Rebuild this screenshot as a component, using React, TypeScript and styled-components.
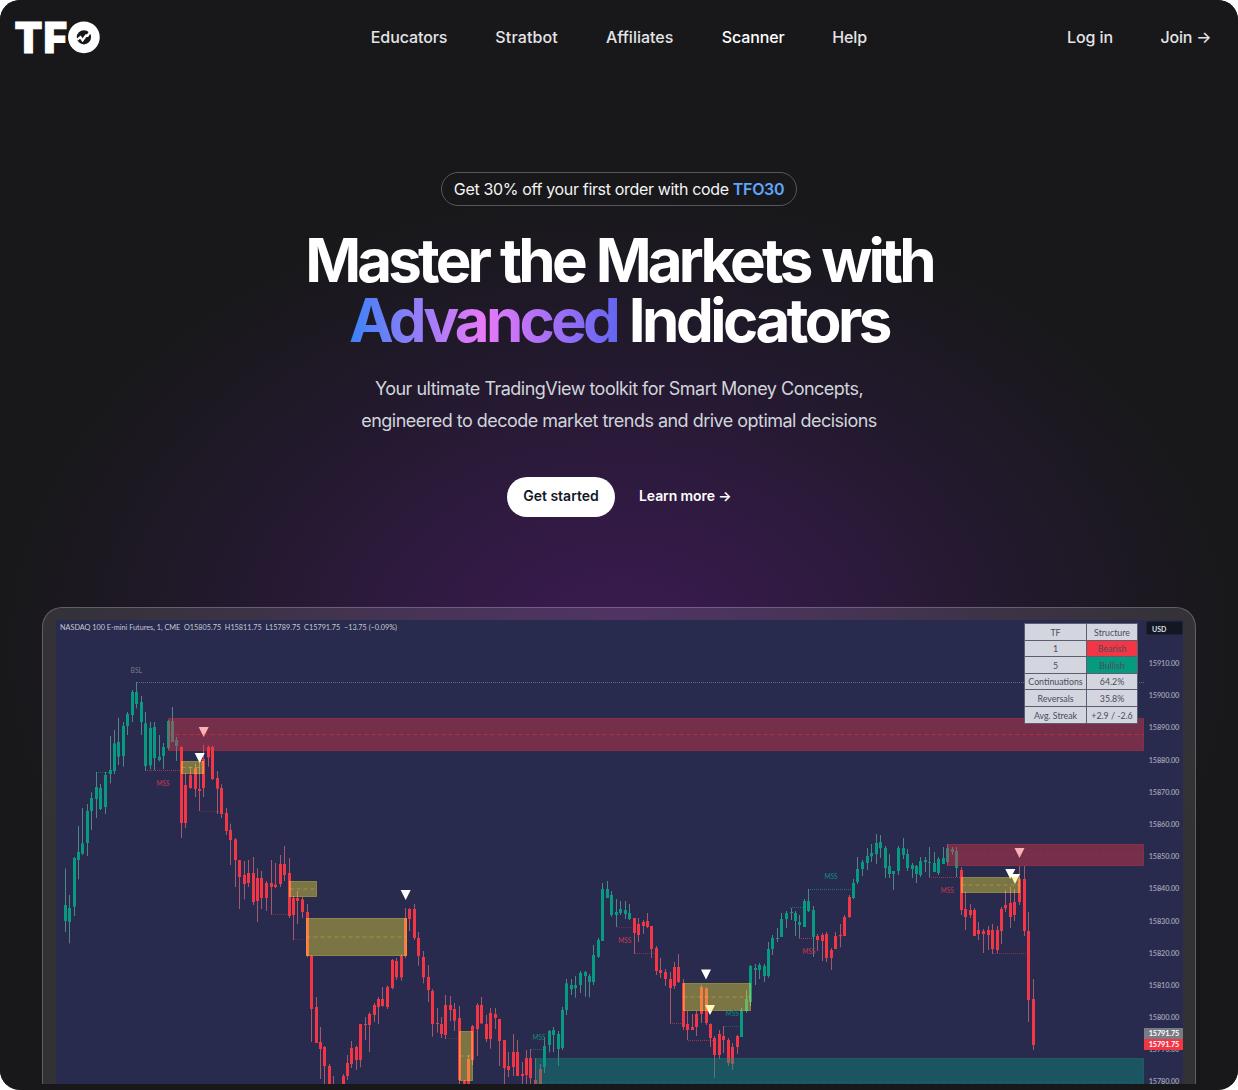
import React from "react";
import styled, { createGlobalStyle } from "styled-components";

const GlobalStyle = createGlobalStyle`
  *, *::before, *::after { box-sizing: border-box; }
  html, body { margin: 0; padding: 0; background: #fff; }
  body { font-family: Inter, "Liberation Sans", sans-serif; }
  a { color: inherit; text-decoration: none; }
`;

const Page = styled.div`
  height: 1090px;
  width: 1238px;
  overflow: hidden;
  border-radius: 20px;
  background: #18181a;
`;

const Hero = styled.div`
  height: 1084px;
  overflow: hidden;
  display: flex;
  flex-direction: column;
  align-items: center;
  background: radial-gradient(ellipse 620px 460px at 619px 650px, #3c1b53 0%, #2f1a40 35%, #21192b 68%, #18181a 100%);

  > * { flex: none; }
`;

const Header = styled.header`
  width: 100%;
  height: 74px;
  padding: 0 12px;
  display: grid;
  grid-template-columns: 1fr auto 1fr;
  align-items: center;
  font-size: 16px;
  font-weight: 500;
  line-height: 24px;
  color: #e4e4e7;
`;

const Nav = styled.nav<{ $end?: boolean }>`
  display: flex;
  gap: 48px;
  padding-right: ${(p) => (p.$end ? 16 : 0)}px;
  justify-content: ${(p) => (p.$end ? "flex-end" : "center")};
`;

const NavLink = styled.a<{ $bright?: boolean; $w: number; $track?: number }>`
  width: ${(p) => p.$w}px;
  white-space: nowrap;
  letter-spacing: ${(p) => p.$track ?? -0.1}px;
  color: ${(p) => (p.$bright ? "#fff" : "#e4e4e7")};
`;

const Promo = styled.div`
  margin-top: 98px;
  height: 34px;
  width: 356px;
  border: 1px solid #57575b;
  border-radius: 17px;
  display: flex;
  align-items: center;
  justify-content: center;
  white-space: pre;
  font-size: 16px;
  letter-spacing: -0.34px;
  color: #f4f4f5;
`;

const Code = styled.span`
  font-weight: 600;
  color: #60a5fa;
`;

const Title = styled.h1`
  margin: 24px 0 0;
  font-size: 60px;
  line-height: 60px;
  font-weight: 650;
  letter-spacing: -3.8px;
  word-spacing: 1.4px;
  text-align: center;
  color: #fff;
  white-space: nowrap;
`;

const Gradient = styled.span`
  color: transparent;
  background: linear-gradient(to right, #3b82f6, #e879f9 50%, #6366f1);
  background-clip: text;
  -webkit-background-clip: text;
`;

const Indicators = styled.span`
  letter-spacing: -3.5px;
`;

const Lead = styled.p`
  margin: 23px 0 0;
  font-size: 18px;
  line-height: 32px;
  text-align: center;
  color: #d1d5db;
  letter-spacing: -0.52px;
`;

const Actions = styled.div`
  margin-top: 40px;
  display: flex;
  align-items: center;
  gap: 24px;
  font-size: 14px;
  line-height: 20px;
  font-weight: 600;
`;

const Primary = styled.a`
  width: 108px;
  height: 40px;
  padding-bottom: 2px;
  border-radius: 20px;
  display: flex;
  align-items: center;
  justify-content: center;
  background: #fff;
  color: #111827;
`;

const Secondary = styled.a`
  width: 92px;
  padding-bottom: 2px;
  color: #fff;
  white-space: nowrap;
  letter-spacing: -0.1px;
`;

const Frame = styled.section`
  margin-top: 90px;
  width: 1154px;
  height: 600px;
  padding: 12px 12px 0 13px;
  border: 1px solid rgba(255, 255, 255, 0.22);
  border-radius: 20px;
  background: rgba(255, 255, 255, 0.115);
`;

const Panel = styled.div`
  position: relative;
  display: flex;
  width: 1127px;
  height: 588px;
  background: #282b4d;
  font-family: Lato, "Open Sans", sans-serif;
`;

const Plot = styled.svg`
  display: block;
  width: 1088px;
  height: 464px;
  font-family: Lato, "Open Sans", sans-serif;
`;

const Axis = styled.div`
  position: relative;
  width: 39px;
  padding-top: 28px;
  height: 464px;
  overflow: hidden;
`;

const Tick = styled.div`
  height: 32.19px;
  line-height: 32.19px;
  font-size: 7.3px;
  font-weight: 600;
  letter-spacing: -0.1px;
  padding-left: 4.7px;
  color: #a3a5b3;
`;

const Currency = styled.div`
  position: absolute;
  top: 1px;
  left: 2px;
  width: 37px;
  height: 14px;
  padding-left: 5px;
  border: 1px solid #1f2338;
  border-radius: 2px;
  background: #131722;
  color: #dcdde2;
  font-size: 7px;
  line-height: 14px;
  font-weight: 700;
`;

const Badge = styled.div<{ $bg: string; $top: number }>`
  position: absolute;
  left: 0;
  top: ${(p) => p.$top}px;
  width: 39px;
  height: 11px;
  padding-left: 4.7px;
  background: ${(p) => p.$bg};
  color: #fff;
  font-size: 7.3px;
  line-height: 11.4px;
  font-weight: 700;
  letter-spacing: -0.1px;
`;

const Stats = styled.div`
  position: absolute;
  left: 968px;
  top: 3px;
  padding: 1px;
  display: grid;
  grid-template-columns: 61px 50px;
  grid-template-rows: 16px 15px 16px 15px 16px 16px;
  gap: 1px;
  background: #5b5e70;
`;

const Stat = styled.div<{ $bg?: string }>`
  display: flex;
  align-items: center;
  justify-content: center;
  white-space: nowrap;
  font-size: 8.8px;
  color: #4a4d5c;
  background: ${(p) => p.$bg ?? "#d3d5df"};
`;

const GREEN = "#089981";
const RED = "#f23645";

// Each run: left and top origin in pixels, then candles as
// [x, high, open/close top, open/close bottom, low, falling?] in thirds of a pixel.
type Candle = [number, number, number, number, number, number];
type Run = { x: number; y: number; candles: Candle[] };

const runs: Run[] = [
  { x: 40, y: 780, candles: [
    [75,265,375,423,456,0],[88,345,384,426,490,0],[103,231,234,380,408,0],[115,138,216,240,298,0],
    [127,84,190,221,225,0],[142,72,93,189,228,0],[154,37,54,93,150,0],
    [571,131,150,180,255,1],[585,174,178,240,321,1],[598,240,240,291,387,1],[613,243,285,312,358,1],
    [625,240,279,309,321,1],[640,231,279,366,375,1],[652,264,294,363,426,1],[664,273,294,354,387,1],
    [679,303,309,354,393,1],[694,240,309,321,403,1],[706,249,314,321,324,1],
  ] },
  { x: 40, y: 600, candles: [
    [169,516,561,597,654,0],[182,552,564,627,630,0],[196,516,525,621,642,0],[211,408,510,522,550,0],
    [223,390,430,513,522,0],[235,353,426,470,495,0],[250,366,378,468,500,0],[262,336,342,378,405,0],
    [277,270,276,345,366,0],[290,246,276,312,325,0],[304,288,306,366,405,0],[316,336,370,498,513,0],
    [331,366,384,496,508,0],[343,366,381,474,510,0],[358,405,470,480,484,0],[370,429,441,468,507,0],
    [385,360,363,444,450,0],[397,321,363,426,426,0],[409,411,420,438,483,0],[424,438,441,669,714,1],
    [437,520,555,669,684,1],[451,500,525,564,566,1],[466,490,505,567,591,1],[478,485,567,573,633,1],
    [490,435,477,564,591,1],[505,437,441,472,500,1],[517,437,441,537,540,1],[532,513,534,566,642,1],
    [545,553,564,642,654,1],[559,624,639,693,705,1],
  ] },
  { x: 240, y: 840, candles: [
    [121,45,72,132,141,1],[133,18,72,105,123,1],[148,54,99,228,234,1],[160,168,174,225,300,1],
    [172,153,174,183,252,1],[187,171,178,216,234,1],[201,192,216,348,352,1],[214,346,348,507,606,1],
    [229,471,501,609,609,1],[241,561,606,627,717,1],[253,618,621,678,732,1],[268,672,678,732,732,1],
    [281,708,732,735,735,1],[309,702,708,732,732,1],[322,645,669,708,720,1],[334,603,624,672,684,1],
    [349,617,621,660,690,1],[361,552,552,660,682,1],[376,531,552,555,600,1],[388,517,522,555,636,1],
    [403,489,495,525,546,1],[416,471,477,501,552,1],[428,441,477,498,500,1],[442,436,441,501,507,1],
    [457,357,360,444,448,1],[469,354,363,412,420,1],[484,342,348,412,422,1],[496,204,234,348,354,1],
    [508,204,207,237,273,1],[523,192,207,294,300,1],[536,276,294,348,377,1],[550,333,351,412,430,1],
    [564,375,411,450,486,1],[577,447,453,552,590,1],[592,504,549,552,578,1],[604,531,552,582,594,1],
    [616,465,495,585,597,1],[631,468,495,510,543,1],[643,489,507,542,573,1],[658,498,534,720,732,1],
    [673,720,723,732,732,1],[686,645,657,732,732,1],[697,555,558,660,675,1],[712,489,495,567,648,1],
  ] },
  { x: 430, y: 860, candles: [
    [154,411,435,490,492,1],[169,465,492,537,546,1],[182,444,459,537,566,1],[196,444,462,474,507,1],
    [208,477,477,543,618,1],[222,540,540,624,672,1],[235,576,618,630,651,1],[250,522,576,621,648,1],
    [262,540,576,648,648,1],[277,606,642,648,672,1],[290,570,594,645,672,1],[301,567,594,654,672,1],
    [316,594,660,672,672,1],[330,612,627,672,672,1],[343,531,558,621,639,0],[358,510,513,555,577,0],
    [370,501,510,525,576,0],[385,513,522,567,618,0],[397,441,450,564,570,0],[409,357,370,450,465,0],
    [424,357,375,388,405,0],[436,348,375,384,413,0],[451,333,339,375,399,0],[465,333,336,348,410,0],
    [477,342,348,366,412,0],[490,255,285,366,375,0],[505,234,240,290,294,0],[517,69,87,243,243,0],
    [532,63,87,114,114,0],[545,93,105,165,170,0],[559,117,156,165,201,0],[571,123,147,159,165,0],
    [585,123,150,162,177,0],[598,132,159,177,180,0],[613,174,174,219,282,1],[625,174,192,225,246,1],
    [640,180,186,198,222,1],[652,159,183,201,204,1],[664,198,198,267,294,1],[679,258,264,333,345,1],
    [692,294,330,339,354,1],[706,327,336,357,378,1],
  ] },
  { x: 640, y: 900, candles: [
    [91,216,237,264,370,1],[103,186,201,258,267,1],[115,162,201,246,249,1],[130,237,249,381,390,1],
    [142,333,372,390,420,1],[157,342,381,390,390,1],[169,333,342,381,408,1],[184,255,261,342,369,1],
    [198,262,265,369,375,1],[211,370,372,414,441,1],[223,408,414,465,534,1],[238,390,402,465,477,1],
    [250,378,408,420,459,1],[265,414,420,489,498,1],[278,429,441,492,510,1],[292,405,408,441,462,1],
    [304,324,333,411,411,0],[318,270,297,333,339,0],[331,195,198,306,318,0],
  ] },
  { x: 740, y: 810, candles: [
    [46,462,474,480,525,0],[58,459,465,480,507,0],[73,462,468,498,516,0],[85,396,417,498,503,0],
    [97,375,384,417,435,0],[112,354,384,387,396,0],[125,309,327,381,381,0],[139,303,309,327,354,0],
    [154,294,306,309,330,0],[166,303,309,333,378,0],[178,315,336,345,384,0],[193,267,273,351,351,0],
    [205,237,273,303,306,0],[220,288,300,381,441,0],[232,372,378,390,423,1],[247,369,375,393,453,1],
    [259,366,372,444,456,1],[274,414,420,444,480,1],[286,366,378,417,417,1],[301,342,375,379,412,1],
    [313,315,321,378,378,1],[328,255,261,321,324,1],[340,207,219,264,267,0],[353,141,177,216,222,0],
    [367,150,156,177,198,0],[381,114,138,159,180,0],[394,102,129,139,156,0],[409,72,99,132,162,0],
    [421,75,96,115,144,0],[436,108,114,174,204,0],[448,132,168,192,204,0],[460,183,183,192,240,0],
    [475,108,114,183,195,0],[489,84,114,135,147,0],[502,117,132,174,183,0],[517,159,165,177,204,0],
    [529,165,168,192,219,0],[541,141,153,195,201,0],[556,141,150,156,186,0],[568,111,156,159,201,0],
    [583,126,159,186,186,0],[596,141,147,189,195,0],[610,111,144,162,162,0],[622,102,114,156,166,0],
    [637,111,117,126,135,0],[649,111,123,174,201,0],[664,171,180,300,315,1],[676,246,297,321,360,1],
    [691,282,300,315,324,1],[704,294,300,378,378,1],
  ] },
  { x: 930, y: 820, candles: [
    [145,306,330,342,360,1],[160,327,333,342,399,1],[175,318,330,345,390,1],[188,312,330,387,402,1],
    [202,318,330,390,399,1],[215,261,267,333,372,1],[227,210,255,265,276,1],[241,201,249,291,324,1],
    [253,207,246,285,303,1],[268,138,177,246,255,1],[282,138,177,333,348,1],[295,276,333,540,606,1],
    [310,477,537,675,690,1],
  ] },
];

const YELLOW = "#ffeb3b";
// [left, top, right, bottom, colour, opacity of the mid line]
const zones: [number, number, number, number, string, number][] = [
  [168.5, 718.5, 1143.5, 750.5, RED, 0.6],
  [947.5, 844.5, 1143.5, 865.5, RED, 0.2],
  [181.5, 761.5, 203.5, 773.5, YELLOW, 0.35],
  [289.5, 881.5, 316.5, 896.5, YELLOW, 0.35],
  [306.5, 918.5, 406.5, 955.5, YELLOW, 0.35],
  [459.5, 1031.5, 472.5, 1080.5, YELLOW, 0.35],
  [683.5, 983.5, 750.5, 1010.5, YELLOW, 0.35],
  [961.5, 877.5, 1019.5, 892.5, YELLOW, 0.35],
  [535.5, 1058.5, 1143.5, 1106.5, GREEN, 0.3],
];

// [x1, x2, y, colour, opacity]
const levels: [number, number, number, string, number][] = [
  [137, 1144, 682.5, "#8c8e9c", 0.6],
  [96, 110, 772.5, GREEN, 0.6],
  [147, 182, 770.5, RED, 0.65],
  [200, 222, 811.5, RED, 0.35],
  [271, 290, 914.5, RED, 0.45],
  [293, 306, 939.5, RED, 0.3],
  [446, 460, 1038.5, RED, 0.3],
  [531, 543, 1049.5, GREEN, 0.6],
  [617, 632, 927.5, RED, 0.3],
  [635, 656, 953.5, RED, 0.5],
  [670, 683, 1023.5, RED, 0.6],
  [688, 714, 1040.5, RED, 0.6],
  [724, 740, 1026.5, GREEN, 0.5],
  [790, 805, 907.5, GREEN, 0.7],
  [808, 853, 889.5, GREEN, 0.7],
  [799, 815, 938.5, RED, 0.7],
  [929, 960, 877.5, RED, 0.6],
  [993, 1027, 953.5, RED, 0.45],
];

const arrows: [number, number][] = [
  [203.7, 727], [199.7, 753], [405.7, 890], [706, 969.5], [710, 1005], [1019.5, 848], [1010.3, 869], [1015, 874],
];

const labels: [number, number, string, string][] = [
  [136.3, 672.7, "BSL", "#777a8c"],
  [163, 786.4, "MSS", "#c93850"],
  [539, 1040, "MSS", "#128a7b"],
  [624.7, 943, "MSS", "#c93850"],
  [732.2, 1016.2, "MSS", "#128a7b"],
  [808.7, 953.7, "MSS", "#c93850"],
  [831, 879, "MSS", "#128a7b"],
  [947.3, 892.7, "MSS", "#c93850"],
];

const stats: [string, string, string?][] = [
  ["TF", "Structure"],
  ["1", "Bearish", RED],
  ["5", "Bullish", GREEN],
  ["Continuations", "64.2%"],
  ["Reversals", "35.8%"],
  ["Avg. Streak", "+2.9 / -2.6"],
];

const prices = Array.from({ length: 14 }, (_, i) => `${15910 - i * 10}.00`);

const LogoMark = styled.svg`
  display: block;
  width: 90px;
  height: 34px;
  overflow: visible;
  font: 900 42px Inter, sans-serif;
`;

const Logo = () => (
  <LogoMark viewBox="12 20 90 34" role="img" aria-label="TFO">
    <g fill="#fff" stroke="#fff" strokeWidth="0.9">
      <text x="14.6" y="52.6" textLength="28" lengthAdjust="spacingAndGlyphs">T</text>
      <text x="43.4" y="52.6" textLength="23.6" lengthAdjust="spacingAndGlyphs">F</text>
    </g>
    <circle cx="83.9" cy="37.3" r="11.5" fill="none" stroke="#fff" strokeWidth="8.7" />
    <path d="M77.2 39.6l3.2-2.4 2.2 3 3.4-4.7 1.6.2 2.3-3.6" fill="none" stroke="#fff" strokeWidth="2.3" />
  </LogoMark>
);

const Candles = () => (
  <>
    {runs.flatMap((run) =>
      run.candles.map(([x, high, top, bottom, low, falling]) => {
        const left = Math.floor(run.x + x / 3);
        const color = falling ? RED : GREEN;
        const y = (v: number) => run.y + v / 3;
        return (
          <g key={`${run.x}-${run.y}-${x}`}>
            <rect x={left} width={1} y={y(high)} height={(low - high) / 3} fill={falling ? "#e8707e" : "#62b5a5"} opacity={0.65} />
            <rect x={left - 1} width={3} y={y(top)} height={(bottom - top) / 3} fill={color} />
          </g>
        );
      })
    )}
  </>
);

const Chart = () => (
  <Plot viewBox="56 620 1088 464">
    {levels.map(([x1, x2, y, color, opacity]) => (
      <line key={`${x1}-${y}`} x1={x1} x2={x2} y1={y} y2={y} stroke={color} opacity={opacity} strokeDasharray="1 1" />
    ))}
    <Candles />
    {arrows.map(([x, y]) => (
      <path key={`${x}-${y}`} d={`M${x - 5} ${y}h10l-5 10z`} fill="#fff" />
    ))}
    {zones.map(([l, t, r, b, color, mid]) => (
      <g key={`${l}-${t}`} stroke={color}>
        <rect x={l} y={t} width={r - l} height={b - t} fill={color} fillOpacity={0.39} strokeOpacity={0.35} />
        <line x1={l} x2={r} y1={(t + b) / 2} y2={(t + b) / 2} strokeDasharray="4 3" strokeOpacity={mid} strokeWidth={0.8} />
      </g>
    ))}
    {labels.map(([x, y, text, color]) => (
      <text key={`${x}-${y}`} x={x} y={y} fill={color} fontSize="7" textAnchor="middle" textLength={text === "BSL" ? 11.5 : 13} lengthAdjust="spacingAndGlyphs">{text}</text>
    ))}
    <text x="60" y="630" fill="#c6c8d1" fontSize="7.4" textLength="337" lengthAdjust="spacingAndGlyphs" xmlSpace="preserve" style={{ whiteSpace: "pre" }}>
      {"NASDAQ 100 E-mini Futures, 1, CME  O15805.75  H15811.75  L15789.75  C15791.75  −13.75 (−0.09%)"}
    </text>
  </Plot>
);

export default function App() {
  return (
    <Page>
      <GlobalStyle />
      <Hero>
        <Header>
          <Logo />
          <Nav>
            <NavLink $w={76.5}>Educators</NavLink>
            <NavLink $w={62.7} $track={0.15}>Stratbot</NavLink>
            <NavLink $w={67.7} $track={0}>Affiliates</NavLink>
            <NavLink $w={62.5} $bright>Scanner</NavLink>
            <NavLink $w={35}>Help</NavLink>
          </Nav>
          <Nav $end>
            <NavLink $w={45.5}>Log in</NavLink>
            <NavLink $w={49.5} $track={-0.2}>Join →</NavLink>
          </Nav>
        </Header>
        <Promo>
          Get 30% off your first order with code <Code>TFO30</Code>
        </Promo>
        <Title>
          Master the Markets with
          <br />
          <Gradient>Advanced</Gradient> <Indicators>Indicators</Indicators>
        </Title>
        <Lead>
          Your ultimate TradingView toolkit for Smart Money Concepts,
          <br />
          engineered to decode market trends and drive optimal decisions
        </Lead>
        <Actions>
          <Primary>Get started</Primary>
          <Secondary>Learn more →</Secondary>
        </Actions>
        <Frame>
          <Panel>
            <Chart />
            <Axis>
              {prices.map((price) => (
                <Tick key={price}>{price}</Tick>
              ))}
              <Currency>USD</Currency>
              <Badge $bg="#787b86" $top={408}>15791.75</Badge>
              <Badge $bg={RED} $top={419}>15791.75</Badge>
            </Axis>
            <Stats>
              {stats.map(([name, value, bg]) => (
                <React.Fragment key={name}>
                  <Stat>{name}</Stat>
                  <Stat $bg={bg}>{value}</Stat>
                </React.Fragment>
              ))}
            </Stats>
          </Panel>
        </Frame>
      </Hero>
    </Page>
  );
}
